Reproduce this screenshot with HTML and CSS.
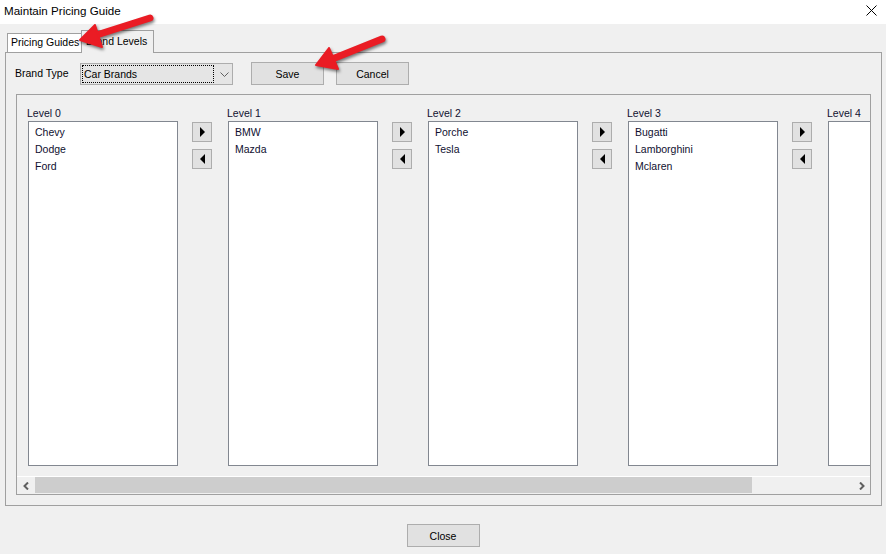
FILE: index.html
```html
<!DOCTYPE html>
<html lang="en">

<head>
    <meta charset="UTF-8">
    <meta name="viewport" content="width=device-width, initial-scale=1.0">
    <title>Maintain Pricing Guide</title>
    <link rel="stylesheet" href="styles.css">
</head>

<body>
    <!-- 标题栏 -->
    <div class="titlebar">
        <span class="title">Maintain Pricing Guide</span>
        <svg class="close-x" width="11" height="11" viewBox="0 0 11 11">
            <path d="M0.5 0.5 L10.5 10.5 M10.5 0.5 L0.5 10.5" stroke="#000" stroke-width="1" fill="none" />
        </svg>
    </div>

    <!-- 标签页 -->
    <div class="tabs">
        <div class="tab">Pricing Guides</div>
        <div class="tab tab-active">Brand Levels</div>
    </div>

    <div class="panel">
        <div class="toolbar">
            <span class="field-label">Brand Type</span>
            <div class="combo">
                <span class="combo-text">Car Brands</span>
                <svg class="combo-arrow" width="9" height="5" viewBox="0 0 9 5">
                    <polyline points="0.5,0.5 4.5,4.5 8.5,0.5" stroke="#606060" fill="none" />
                </svg>
            </div>
            <button class="btn btn-save">Save</button>
            <button class="btn">Cancel</button>
        </div>

        <div class="levels-box">
            <div class="levels-view">
                <div class="level-col">
                    <div class="level">
                        <div class="level-label">Level 0</div>
                        <ul class="listbox">
                            <li>Chevy</li>
                            <li>Dodge</li>
                            <li>Ford</li>
                        </ul>
                    </div>
                    <div class="movers">
                        <button class="mover"><svg width="5" height="10" viewBox="0 0 5 10"><polygon points="0,0 5,5 0,10" /></svg></button>
                        <button class="mover"><svg width="5" height="10" viewBox="0 0 5 10"><polygon points="5,0 0,5 5,10" /></svg></button>
                    </div>
                </div>
                <div class="level-col">
                    <div class="level">
                        <div class="level-label">Level 1</div>
                        <ul class="listbox">
                            <li>BMW</li>
                            <li>Mazda</li>
                        </ul>
                    </div>
                    <div class="movers">
                        <button class="mover"><svg width="5" height="10" viewBox="0 0 5 10"><polygon points="0,0 5,5 0,10" /></svg></button>
                        <button class="mover"><svg width="5" height="10" viewBox="0 0 5 10"><polygon points="5,0 0,5 5,10" /></svg></button>
                    </div>
                </div>
                <div class="level-col">
                    <div class="level">
                        <div class="level-label">Level 2</div>
                        <ul class="listbox">
                            <li>Porche</li>
                            <li>Tesla</li>
                        </ul>
                    </div>
                    <div class="movers">
                        <button class="mover"><svg width="5" height="10" viewBox="0 0 5 10"><polygon points="0,0 5,5 0,10" /></svg></button>
                        <button class="mover"><svg width="5" height="10" viewBox="0 0 5 10"><polygon points="5,0 0,5 5,10" /></svg></button>
                    </div>
                </div>
                <div class="level-col">
                    <div class="level">
                        <div class="level-label">Level 3</div>
                        <ul class="listbox">
                            <li>Bugatti</li>
                            <li>Lamborghini</li>
                            <li>Mclaren</li>
                        </ul>
                    </div>
                    <div class="movers">
                        <button class="mover"><svg width="5" height="10" viewBox="0 0 5 10"><polygon points="0,0 5,5 0,10" /></svg></button>
                        <button class="mover"><svg width="5" height="10" viewBox="0 0 5 10"><polygon points="5,0 0,5 5,10" /></svg></button>
                    </div>
                </div>
                <div class="level-col">
                    <div class="level">
                        <div class="level-label">Level 4</div>
                        <ul class="listbox"></ul>
                    </div>
                </div>
            </div>
            <!-- 横向滚动条 -->
            <div class="hscroll">
                <div class="hs-btn">
                    <svg width="6" height="8" viewBox="0 0 6 8"><polyline points="5,0.5 1.5,4 5,7.5" stroke="#606060" stroke-width="2" fill="none" /></svg>
                </div>
                <div class="hs-track">
                    <div class="hs-thumb"></div>
                </div>
                <div class="hs-btn">
                    <svg width="6" height="8" viewBox="0 0 6 8"><polyline points="1,0.5 4.5,4 1,7.5" stroke="#606060" stroke-width="2" fill="none" /></svg>
                </div>
            </div>
        </div>
    </div>

    <div class="footer">
        <button class="btn">Close</button>
    </div>

    <!-- 标注箭头 -->
    <svg class="marks" width="886" height="554" viewBox="0 0 886 554">
        <g fill="#ea1c24" stroke="#ea1c24">
            <line x1="95" y1="35.5" x2="150" y2="18" stroke-width="7" stroke-linecap="round" />
            <polygon points="80,40 102,47 95,25" stroke-width="2" stroke-linejoin="round" />
            <line x1="331" y1="59.5" x2="382" y2="39" stroke-width="7" stroke-linecap="round" />
            <polygon points="316,65 338,69 329,48" stroke-width="2" stroke-linejoin="round" />
        </g>
    </svg>
</body>

</html>
```

FILE: styles.css
```css
html,
body {
    padding: 0;
    margin: 0;
}

body {
    background-color: #f0f0f0;
    font-family: "Liberation Sans", Arial, sans-serif;
    font-size: 10.5px;
    color: #101030;
    position: relative;
    width: 886px;
    height: 554px;
    overflow: hidden;
}

/* 标题栏 */
.titlebar {
    height: 24px;
    background-color: #fff;
    display: flex;
    align-items: center;
    justify-content: space-between;
    padding: 0 9px 0 4px;
    box-sizing: border-box;
}

.title {
    font-size: 11.6px;
    color: #000;
    margin-top: -3px;
}

.close-x {
    margin-top: -3px;
}

/* 标签页 */
.tabs {
    display: flex;
    align-items: flex-end;
    height: 22px;
    margin-top: 6px;
    padding-left: 7px;
}

.tab {
    width: 74px;
    height: 19px;
    line-height: 17px;
    padding: 0 0 1px 3px;
    box-sizing: border-box;
    background-color: #fff;
    border: 1px solid #a0a0a0;
    border-bottom: none;
    border-right: none;
    color: #000;
    white-space: nowrap;
    overflow: hidden;
}

.tab-active {
    width: 73px;
    height: 23px;
    padding: 2px 0 3px 4px;
    background-color: #f0f0f0;
    border-right: 1px solid #a0a0a0;
    margin-bottom: -1px;
    position: relative;
    z-index: 1;
}

.panel {
    margin: 0 4px 0 5px;
    height: 454px;
    border: 1px solid #a0a0a0;
    box-sizing: border-box;
}

.toolbar {
    display: flex;
    align-items: flex-start;
    padding: 9px 0 0 9px;
}

.field-label {
    width: 65px;
    line-height: 23px;
    color: #000;
}

.combo {
    width: 153px;
    height: 22px;
    margin-top: 1px;
    border: 1px solid #adadad;
    background-color: #e5e5e5;
    box-sizing: border-box;
    display: flex;
    align-items: center;
    padding: 1px;
}

.combo-text {
    width: 132px;
    height: 18px;
    line-height: 17px;
    box-sizing: border-box;
    border: 1px dotted #000;
    padding-left: 1px;
    color: #000;
}

.combo-arrow {
    margin-left: 6px;
}

.btn {
    width: 73px;
    height: 23px;
    padding: 0;
    border: 1px solid #adadad;
    background-color: #e1e1e1;
    font-family: inherit;
    font-size: 10.5px;
    color: #000;
    margin-right: 12px;
}

.btn-save {
    margin-left: 18px;
}

/* 等级列表区 */
.levels-box {
    margin: 9px 10px 0;
    height: 401px;
    border: 1px solid #a0a0a0;
    box-sizing: border-box;
}

.levels-view {
    height: 381px;
    padding: 12px 0 0 10px;
    box-sizing: border-box;
    display: flex;
    overflow: hidden;
}

.level-col {
    display: flex;
    flex-shrink: 0;
}

.level {
    width: 151px;
}

.level-label {
    line-height: 12px;
    height: 14px;
}

.listbox {
    list-style: none;
    margin: 0 0 0 1px;
    padding: 2px 0 0 6px;
    width: 150px;
    height: 345px;
    box-sizing: border-box;
    border: 1px solid #828790;
    background-color: #fff;
}

.listbox li {
    line-height: 17px;
}

.movers {
    display: flex;
    flex-direction: column;
    gap: 7px;
    margin: 15px 15px 0 14px;
}

.mover {
    width: 20px;
    height: 20px;
    padding: 0;
    border: 1px solid #adadad;
    background-color: #e1e1e1;
    display: flex;
    align-items: center;
    justify-content: center;
}

.mover svg {
    fill: #000;
}

/* 滚动条 */
.hscroll {
    height: 18px;
    border-top: 1px solid #fff;
    box-sizing: border-box;
    display: flex;
}

.hs-btn {
    width: 17px;
    display: flex;
    align-items: center;
    justify-content: center;
}

.hs-track {
    flex: 1;
    padding: 0 1px;
}

.hs-thumb {
    width: 717px;
    height: 16px;
    background-color: #cdcdcd;
}

.footer {
    display: flex;
    justify-content: center;
    margin-top: 18px;
}

.footer .btn {
    margin-right: 0;
}

.marks {
    position: absolute;
    left: 0;
    top: 0;
    z-index: 2;
    pointer-events: none;
    filter: drop-shadow(1px 2px 1.5px rgba(0, 0, 0, 0.5));
}
```
